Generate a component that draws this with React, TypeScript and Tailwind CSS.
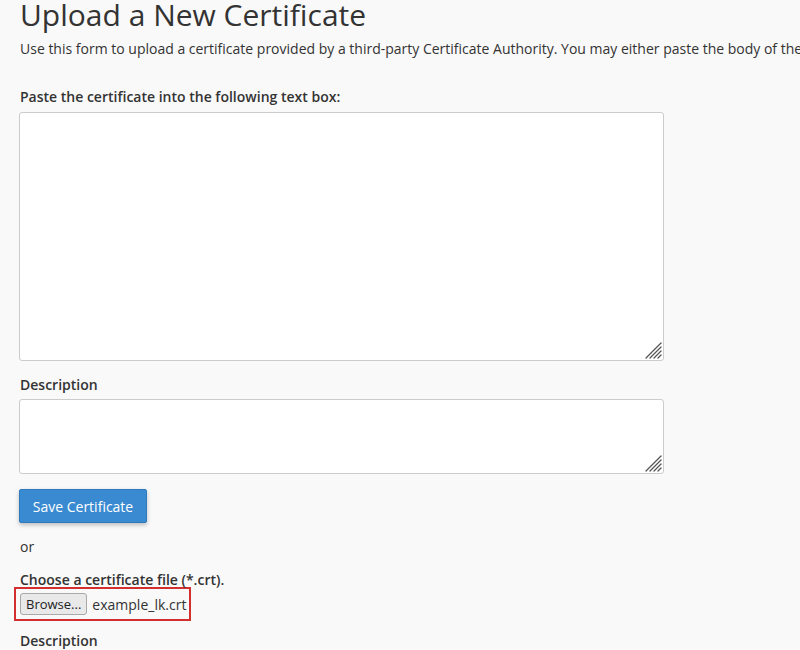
import React from "react";

function Grip() {
  return (
    <svg
      width="18"
      height="18"
      viewBox="0 0 18 18"
      className="pointer-events-none absolute bottom-[2px] right-[2px]"
    >
      <g stroke="#555" strokeWidth="1.3" strokeLinecap="round">
        <line x1="17" y1="2" x2="2" y2="17" />
        <line x1="17" y1="6" x2="6" y2="17" />
        <line x1="17" y1="10" x2="10" y2="17" />
        <line x1="17" y1="14" x2="14" y2="17" />
      </g>
    </svg>
  );
}

function Area({ height }: { height: string }) {
  return (
    <div className={`relative w-[645px] ${height}`}>
      <textarea className="block h-full w-full resize-none rounded-[3px] border border-[#cccccc] bg-white outline-none" />
      <Grip />
    </div>
  );
}

export default function App() {
  return (
    <div
      className="h-[650px] w-[800px] overflow-hidden bg-[#f9f9f9] pl-[19px] text-[#333333]"
      style={{ fontFamily: '"Open Sans", "Liberation Sans", sans-serif' }}
    >
      <h1 className="mt-[-6px] whitespace-nowrap pl-[1px] text-[30px] font-normal leading-[42px]">
        Upload a New Certificate
      </h1>
      <p className="mt-[3px] whitespace-nowrap pl-[1px] text-[14px] leading-[20px]">
        Use this form to upload a certificate provided by a third-party Certificate
        Authority. You may either paste the body of the certificate or upload it from a file.
      </p>

      <label className="mt-[28px] block pl-[1px] text-[14px] font-semibold leading-[20px]">
        Paste the certificate into the following text box:
      </label>
      <div className="mt-[5px]">
        <Area height="h-[249px]" />
      </div>

      <label className="mt-[14px] block pl-[1px] text-[14px] font-semibold leading-[20px]">
        Description
      </label>
      <div className="mt-[4px]">
        <Area height="h-[75px]" />
      </div>

      <button className="mt-[15px] block h-[34px] w-[128px] rounded-[2px] border border-[#2f79bd] bg-[#3a8ad1] text-[14px] text-white shadow-[0_2px_4px_rgba(0,0,0,0.25)]">
        Save Certificate
      </button>

      <div className="mt-[14px] pl-[1px] text-[14px] leading-[20px]">or</div>

      <label className="mt-[13px] block pl-[1px] text-[14px] font-semibold leading-[20px]">
        Choose a certificate file (*.crt).
      </label>
      <div className="ml-[-5px] mt-[-3px] flex h-[34px] w-[177px] items-center gap-[5px] border-2 border-[#d32f2f] pl-[4px]">
        <span className="flex h-[22px] items-center rounded-[3px] border border-[#a9a9a9] bg-[#e9e9e9] px-[5px] text-[13px] leading-none text-[#222]">
          Browse...
        </span>
        <span className="text-[14px] text-[#333333]">example_lk.crt</span>
      </div>

      <label className="mt-[10px] block pl-[1px] text-[14px] font-semibold leading-[20px]">
        Description
      </label>
    </div>
  );
}
